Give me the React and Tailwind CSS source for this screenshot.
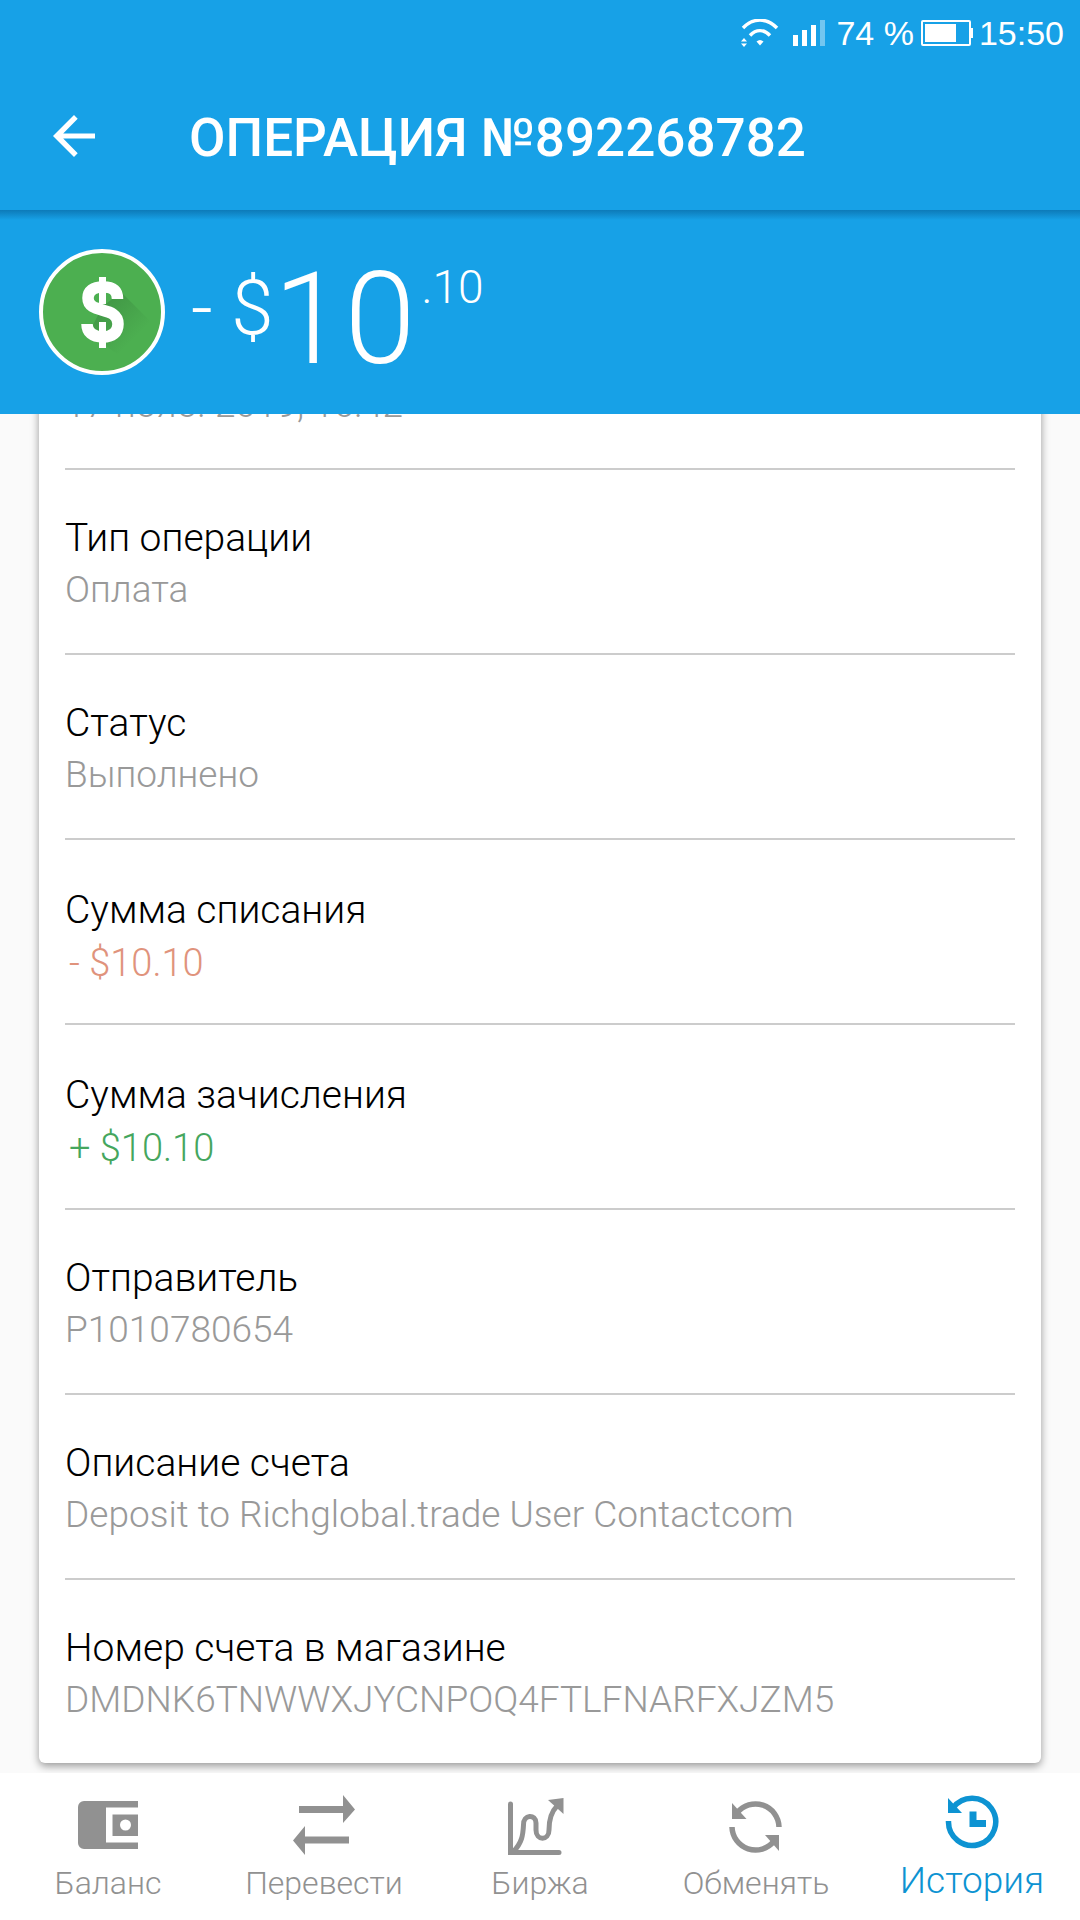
const rows = [
  { value: '17 нояб. 2019, 16:42' },
  { label: 'Тип операции', value: 'Оплата' },
  { label: 'Статус', value: 'Выполнено' },
  { label: 'Сумма списания', value: '- $10.10', kind: 'debit' },
  { label: 'Сумма зачисления', value: '+ $10.10', kind: 'credit' },
  { label: 'Отправитель', value: 'P1010780654' },
  { label: 'Описание счета', value: 'Deposit to Richglobal.trade User Contactcom' },
  { label: 'Номер счета в магазине', value: 'DMDNK6TNWWXJYCNPOQ4FTLFNARFXJZM5' },
];

const amountTone = { debit: 'text-[#e0937c]', credit: 'text-[#45a65e]' };

function StatusBar() {
  return (
    <div className="flex h-[66px] items-center justify-end pr-[16px] font-['Liberation_Sans',sans-serif] text-[34px] leading-[38px]">
      <svg className="mr-[14px] h-[28px] w-[38px]" viewBox="0 0 38 28" fill="none" stroke="currentColor" aria-label="Wi-Fi">
        <path d="M2 9C12 -1.500 26 -1.500 36 9" strokeWidth="3.400" />
        <path d="M9 16.500C15 10 23 10 29 16.500" strokeWidth="3.400" />
        <path d="M15.500 22.500Q19 19.500 22.500 22.500L19 26.500Z" fill="currentColor" stroke="none" />
        <path d="M0 22.500L3 19L6 22.500ZM0 24.500L3 28L6 24.500Z" fill="currentColor" stroke="none" />
      </svg>
      <svg className="mr-[10px] h-[26px] w-[33px]" viewBox="0 0 33 26" fill="currentColor" aria-label="Сигнал сети">
        <path d="M0 15h5v11H0zM9 10h5v16H9zM18 5h5v21h-5z" />
        <path d="M27 0h5v26h-5z" opacity="0.4" />
      </svg>
      <span>74 %</span>
      <svg className="mr-[6px] ml-[7px] h-[26px] w-[52px]" viewBox="0 0 52 26" fill="currentColor" aria-label="Батарея">
        <rect x="1" y="1" width="48" height="24" rx="1" fill="none" stroke="currentColor" strokeWidth="2" />
        <path d="M4 4h31v18H4zM49 8h3v10h-3z" />
      </svg>
      <time>15:50</time>
    </div>
  );
}

function TopBar() {
  return (
    <div className="flex h-[144px] items-center">
      <button type="button" aria-label="Назад" className="flex w-[189px] pb-[4px] pl-[53px]">
        <svg className="h-[42px] w-[42px]" viewBox="0 0 42 42" fill="currentColor">
          <path d="M42 18.400H10.200L24.700 3.700L21 0L0 21L21 42L24.700 38.300L10.200 23.600H42z" />
        </svg>
      </button>
      <h1 className="text-[53px] leading-[64px] font-medium whitespace-nowrap">ОПЕРАЦИЯ №892268782</h1>
    </div>
  );
}

function CurrencyBadge() {
  return (
    <svg className="h-[126px] w-[126px]" viewBox="0 0 126 126" aria-label="USD">
      <defs>
        <linearGradient id="badge-shade" x1="60" y1="55" x2="95" y2="90" gradientUnits="userSpaceOnUse">
          <stop offset="0" stopColor="#419645" />
          <stop offset="1" stopColor="#4caf50" />
        </linearGradient>
      </defs>
      <circle cx="63" cy="63" r="61" fill="#4caf50" />
      <path d="M82 43L119 80L90 114L50 84L63 58Z" fill="url(#badge-shade)" />
      <circle cx="63" cy="63" r="61" fill="none" stroke="#fff" strokeWidth="4" />
      <path d="M78.500 50C78.500 41 73 38 64 38C54 38 49 42 49 49C49 66 79 56 79 75C79 84 73 88 64 88C53 88 48 83 48 75" fill="none" stroke="#fff" strokeWidth="11.500" />
      <path d="M60 28h7v27h-7zM60 73h7v26h-7z" fill="#fff" />
    </svg>
  );
}

function Summary() {
  return (
    <section className="bg-linear-to-b from-[#0d7ab8] to-[#17a1e7] bg-[length:100%_10px] bg-no-repeat">
      <div className="flex h-[204px] items-start px-[39px] pt-[39px]">
        <CurrencyBadge />
        <p className="flex items-start pl-[26px] font-light">
          <span className="pt-[13px] text-[76px] leading-[92px] whitespace-pre">- $</span>
          <span className="pt-[4px] text-[128px] leading-[132px]">10</span>
          <span className="pt-[10px] pl-[6px] text-[46px] leading-[56px]">.10</span>
        </p>
      </div>
    </section>
  );
}

function DetailRow({ label, value, kind }) {
  const box = kind ? 'pt-[44px] pb-[33px] leading-[53px]' : 'pt-[43px] pb-[38px] leading-[51px]';
  const tone = kind ? `pl-[4px] text-[38px] ${amountTone[kind]}` : 'text-[37px] text-[#999999]';
  return (
    <div className={`border-b-2 border-[#cccccc] font-light last:border-b-0 ${box}`}>
      {label && <dt className="text-[39px] text-black">{label}</dt>}
      <dd className={tone}>{value}</dd>
    </div>
  );
}

function WalletIcon() {
  return (
    <svg className="h-[60px] w-[60px]" viewBox="0 0 60 60" fill="currentColor" fillRule="evenodd">
      <path d="M6 6H60V12.500H28V47.500H60V54H6A6 6 0 0 1 0 48V12A6 6 0 0 1 6 6ZM34.500 19.500H60V41H34.500ZM47.500 24.500A5.500 5.500 0 1 0 47.500 35.500A5.500 5.500 0 1 0 47.500 24.500Z" />
    </svg>
  );
}

function TransferIcon() {
  return (
    <svg className="h-[60px] w-[62px]" viewBox="0 0 62 60" fill="currentColor">
      <path d="M6 11H50V0L62 14.500L50 28V18H6ZM56 41.500V48.500H12V60L0 45.500L12 31V41.500Z" />
    </svg>
  );
}

function ExchangeIcon() {
  return (
    <svg className="h-[60px] w-[64px]" viewBox="0 -3 64 60" fill="none" stroke="currentColor" strokeWidth="5">
      <path d="M2.500 6V54.500H51" strokeLinecap="round" />
      <path d="M0 50h6v7H0z" fill="currentColor" stroke="none" />
      <path d="M5 54C14 45 15 37 15.500 27C15 16 28 16 28 25V32C28 43 41 43 41 32C41 21 43 14 49 8" />
      <path d="M40 2L55.500 0V16Z" fill="currentColor" stroke="none" />
    </svg>
  );
}

function SwapIcon() {
  return (
    <svg className="h-[60px] w-[54px]" viewBox="0 -5 54 60" fill="none" stroke="currentColor" strokeWidth="5.500">
      <path d="M8 13A23.500 23.500 0 0 1 50 27" />
      <path d="M3 27A23.500 23.500 0 0 0 45 41" />
      <path d="M3 3V19H17.500ZM50 51V35H36Z" fill="currentColor" stroke="none" />
    </svg>
  );
}

function HistoryIcon() {
  return (
    <svg className="h-[60px] w-[54px]" viewBox="0 0 54 60" fill="none" stroke="currentColor" strokeWidth="5.500">
      <path d="M8 13A23.600 23.600 0 1 1 3.500 26" />
      <path d="M3 3V18H17Z" fill="currentColor" stroke="none" />
      <path d="M24.500 16.500h7v8.500h9.500v7H24.500z" fill="currentColor" stroke="none" />
    </svg>
  );
}

const tabs = [
  { label: 'Баланс', Icon: WalletIcon },
  { label: 'Перевести', Icon: TransferIcon },
  { label: 'Биржа', Icon: ExchangeIcon },
  { label: 'Обменять', Icon: SwapIcon },
  { label: 'История', Icon: HistoryIcon, active: true },
];

function BottomNav() {
  return (
    <nav className="relative grid h-[147px] grid-cols-5 bg-white">
      {tabs.map(({ label, Icon, active }) => (
        <a
          key={label}
          href="#"
          aria-current={active ? 'page' : undefined}
          className={`flex flex-col items-center pt-[22px] font-light ${
            active ? 'text-[37px] text-[#0d93d2]' : 'text-[32px] text-[#919191]'
          }`}
        >
          <Icon />
          <span className={active ? 'pt-[6px] leading-[40px]' : 'pt-[8px] leading-[40px]'}>{label}</span>
        </a>
      ))}
    </nav>
  );
}

export default function App() {
  return (
    <div className="flex h-screen flex-col bg-[#fafafa] font-['Roboto',sans-serif]">
      <header className="relative bg-[#17a1e7] text-white">
        <StatusBar />
        <TopBar />
        <Summary />
      </header>
      <main className="flex min-h-0 flex-1 flex-col justify-end overflow-hidden px-[39px] pb-[10px]">
        <dl className="rounded-[6px] bg-white px-[26px] shadow-[0_3px_8px_rgba(0,0,0,0.4)]">
          {rows.map((row) => (
            <DetailRow key={row.value + row.label} {...row} />
          ))}
        </dl>
      </main>
      <BottomNav />
    </div>
  );
}
